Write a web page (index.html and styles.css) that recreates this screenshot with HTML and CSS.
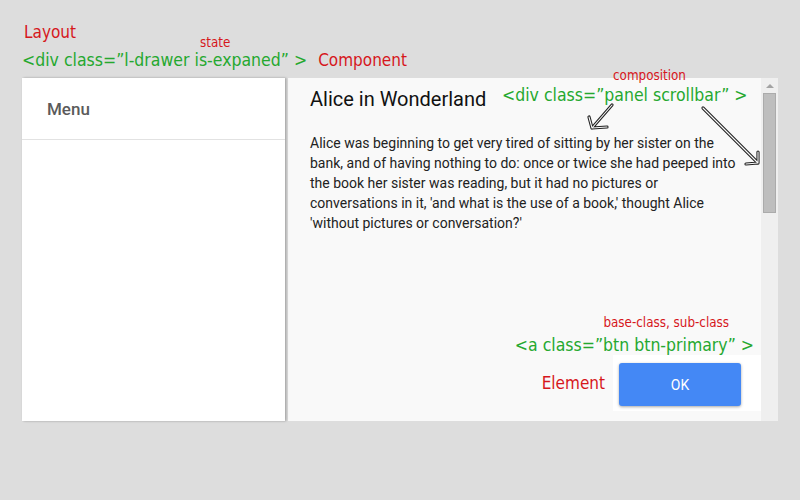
FILE: index.html
```html
<!DOCTYPE html>
<html>
<head>
<meta charset="utf-8">
<link rel="stylesheet" href="styles.css">
</head>
<body>
<div class="page">
  <div class="annot-top">
    <div class="note red big layout-label">Layout</div>
    <div class="annot-row">
      <span class="note green code drawer-code">&lt;div class=”l-drawer is-expaned” &gt;<span class="note red small state">state</span></span>
      <span class="note red big">Component</span>
    </div>
  </div>
  <div class="frame">
    <aside class="drawer">
      <div class="drawer-head">Menu</div>
    </aside>
    <main class="panel">
      <h1 class="title">Alice in Wonderland</h1>
      <p class="text">Alice was beginning to get very tired of sitting by her sister on the<br>bank, and of having nothing to do: once or twice she had peeped into<br>the book her sister was reading, but it had no pictures or<br>conversations in it, 'and what is the use of a book,' thought Alice<br>'without pictures or conversation?'</p>
      <div class="panel-foot">
        <div class="btn-notes">
          <span class="note red small">base-class, sub-class</span>
          <span class="note green code">&lt;a class=”btn btn-primary” &gt;</span>
        </div>
        <div class="foot-row">
          <span class="note red big">Element</span>
          <div class="btn-box"><a class="btn btn-primary">OK</a></div>
        </div>
      </div>
      <div class="panel-notes">
        <span class="note red small">composition</span>
        <span class="note green code">&lt;div class=”panel scrollbar” &gt;</span>
      </div>
      <svg class="arrows" width="473" height="343" viewBox="288 78 473 343">
        <g fill="none" stroke-linecap="round" stroke-linejoin="round">
          <g stroke="#222" stroke-width="3.2">
            <path d="M612 105 L592 128 M589 117 L592 128 L607 127"/>
            <path d="M703 108 L758 163 M758 152 L758 163 L746 164"/>
          </g>
          <g stroke="#f9f9f9" stroke-width="1.1">
            <path d="M612 105 L592 128 M589 117 L592 128 L607 127"/>
            <path d="M703 108 L758 163 M758 152 L758 163 L746 164"/>
          </g>
        </g>
      </svg>
    </main>
    <div class="scrollbar">
      <span class="sb-arrow"></span>
      <div class="sb-thumb"></div>
    </div>
  </div>
</div>
</body>
</html>
```

FILE: styles.css
```css
html, body {
  margin: 0;
  padding: 0;
  background: #dddddd;
  width: 800px;
  height: 500px;
  overflow: hidden;
}

.page {
  padding: 22px 22px 0 22px;
}

.note {
  font-family: "DejaVu Sans Condensed", "DejaVu Sans", sans-serif;
  white-space: nowrap;
}
.note.red { color: #d6171c; }
.note.green { color: #25a82f; }
.note.big { font-size: 17px; line-height: 20px; }
.note.code { font-size: 17.5px; line-height: 20px; }
.note.small { font-size: 13.3px; line-height: 16px; }

.annot-top {
  height: 56px;
}
.layout-label {
  padding-left: 2px;
  height: 28px;
}
.annot-row {
  display: flex;
  align-items: baseline;
  gap: 11px;
}
.drawer-code {
  position: relative;
}
.state {
  position: absolute;
  left: 178px;
  top: -15px;
}

.frame {
  display: flex;
  width: 756px;
  height: 343px;
}

.drawer {
  width: 263px;
  flex: none;
  background: #ffffff;
  position: relative;
  z-index: 1;
  box-shadow: 1px 0 2px rgba(0, 0, 0, 0.22), 2px 0 3px rgba(0, 0, 0, 0.08);
}
.drawer-head {
  height: 61px;
  border-bottom: 1px solid #e2e2e2;
  padding-left: 25px;
  display: flex;
  align-items: center;
  font-family: Roboto, "Liberation Sans", sans-serif;
  font-weight: 500;
  font-size: 17px;
  color: #5b5b5b;
}

.panel {
  flex: 1;
  position: relative;
  margin-left: 3px;
  background: #f9f9f9;
  padding: 0 0 10px 22px;
  display: flex;
  flex-direction: column;
  font-family: Roboto, "Liberation Sans", sans-serif;
}
.title {
  margin: 9px 0 0 0;
  font-size: 20px;
  font-weight: 400;
  line-height: 24px;
  color: #111;
}
.text {
  margin: 22px 0 0 0;
  font-size: 14px;
  line-height: 20px;
  color: #222;
}

.panel-foot {
  margin-top: auto;
  display: flex;
  flex-direction: column;
  align-items: flex-end;
}
.btn-notes {
  display: flex;
  flex-direction: column;
  align-items: flex-end;
  padding-right: 7px;
  margin-bottom: 0;
}
.btn-notes .small {
  margin-right: 25px;
  margin-bottom: 4px;
}
.foot-row {
  display: flex;
  align-items: center;
  gap: 8px;
}
.btn-box {
  background: #ffffff;
  width: 148px;
  height: 56px;
  padding: 8px 0 0 6px;
  box-sizing: border-box;
}
.btn {
  display: flex;
  align-items: center;
  justify-content: center;
  width: 122px;
  height: 43px;
  background: #4488f5;
  border-radius: 3px;
  box-shadow: 0 1px 3px rgba(0, 0, 0, 0.35);
  color: #ffffff;
  font-family: Roboto, "Liberation Sans", sans-serif;
  font-size: 14px;
  text-decoration: none;
}

.panel-notes {
  position: absolute;
  left: 214px;
  top: -10px;
  display: flex;
  flex-direction: column;
  align-items: flex-start;
}
.panel-notes .small {
  margin-left: 111px;
  margin-bottom: 1px;
}

.arrows {
  position: absolute;
  left: 0;
  top: 0;
  pointer-events: none;
}

.scrollbar {
  width: 17px;
  flex: none;
  background: #efefef;
  position: relative;
  display: flex;
  flex-direction: column;
  align-items: center;
}
.sb-arrow {
  margin-top: 6px;
  width: 0;
  height: 0;
  border-left: 4px solid transparent;
  border-right: 4px solid transparent;
  border-bottom: 4px solid #a3a3a3;
}
.sb-thumb {
  margin-top: 5px;
  width: 11px;
  height: 118px;
  background: #bebebe;
  border: 1px solid #ababab;
}
```
